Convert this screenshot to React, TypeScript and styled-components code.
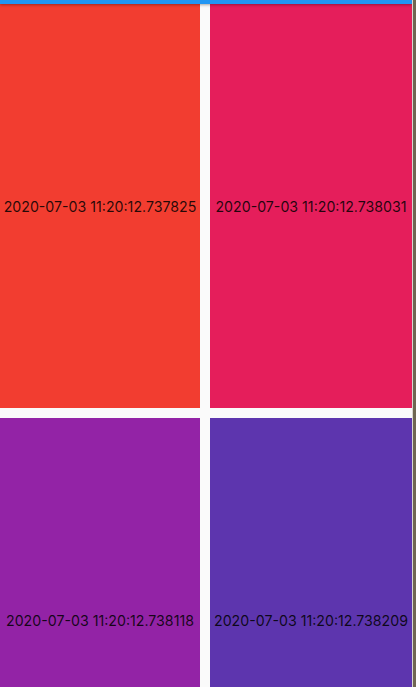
import React from "react";
import styled, { createGlobalStyle } from "styled-components";

const Global = createGlobalStyle`
  html, body { margin: 0; padding: 0; height: 100%; overflow: hidden; background: #6f6652; }
  #root { height: 100%; }
`;

const Frame = styled.div`
  display: flex;
  height: 687px;
  width: 416px;
  overflow: hidden;
`;

const Screen = styled.div`
  position: relative;
  width: 412px;
  flex: none;
  background: #fafafa;
  border-right: 1px solid #d8d6d0;
  box-sizing: content-box;
  overflow: hidden;
`;

const Edge = styled.div`
  flex: 1;
  background: #6f6652;
`;

const TopBar = styled.div`
  position: absolute;
  top: 0;
  left: 0;
  right: 0;
  height: 4px;
  background: #2196f3;
  box-shadow: 0 1px 3px rgba(0, 0, 0, 0.35);
  z-index: 2;
`;

const Grid = styled.div`
  display: grid;
  grid-template-columns: 200px 202px;
  grid-auto-rows: 404px;
  column-gap: 10px;
  row-gap: 10px;
  padding-top: 4px;
`;

const Tile = styled.div<{ $bg: string }>`
  background: ${(p) => p.$bg};
  display: flex;
  align-items: center;
  justify-content: center;
  font-family: Inter, Roboto, "Noto Sans", sans-serif;
  font-size: 14.2px;
  color: rgba(0, 0, 0, 0.85);
  white-space: nowrap;
`;

const tiles = [
  { bg: "#f23d30", t: "2020-07-03 11:20:12.737825" },
  { bg: "#e51e5b", t: "2020-07-03 11:20:12.738031" },
  { bg: "#9323a6", t: "2020-07-03 11:20:12.738118" },
  { bg: "#5d35ae", t: "2020-07-03 11:20:12.738209" },
];

export default function App() {
  return (
    <Frame>
      <Global />
      <Screen>
        <TopBar />
        <Grid>
          {tiles.map((x) => (
            <Tile key={x.t} $bg={x.bg}>
              {x.t}
            </Tile>
          ))}
        </Grid>
      </Screen>
      <Edge />
    </Frame>
  );
}
